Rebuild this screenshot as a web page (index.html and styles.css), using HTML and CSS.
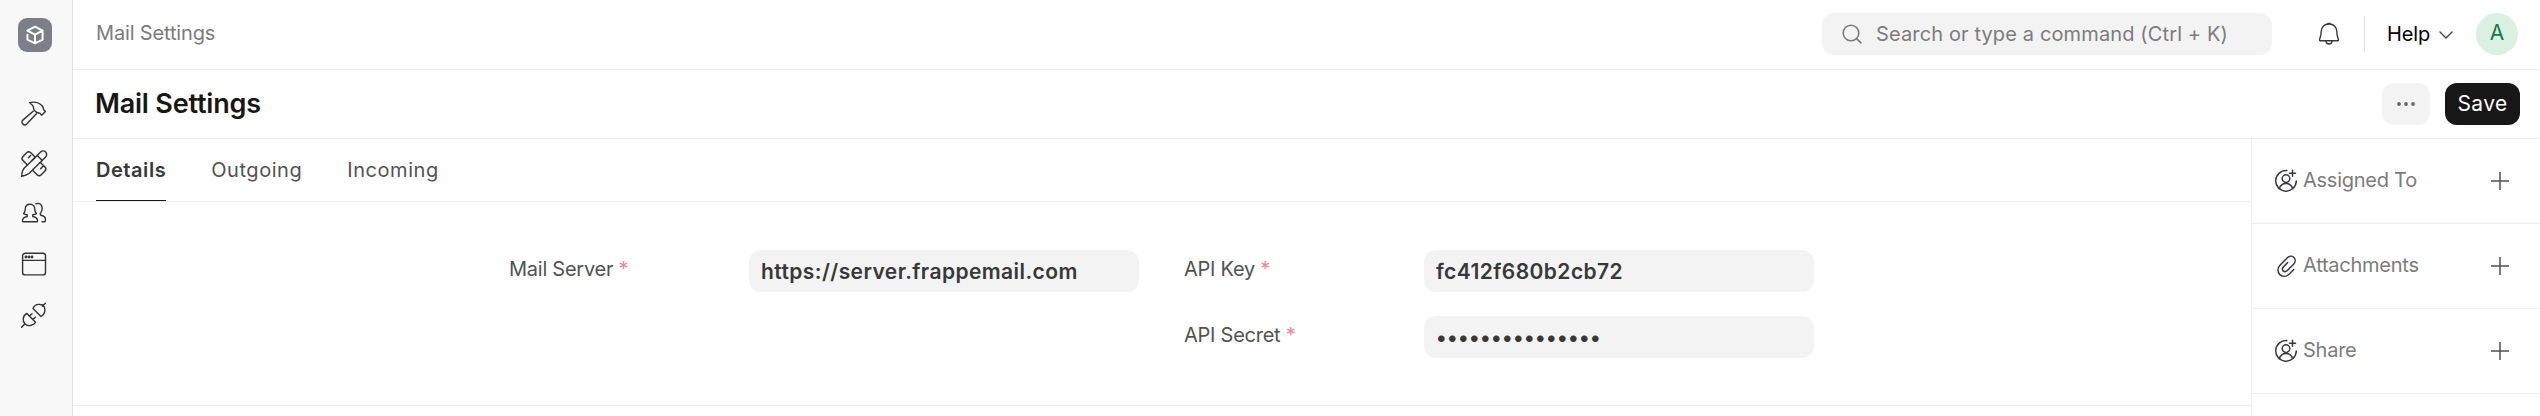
FILE: index.html
```html
<!DOCTYPE html>
<html lang="en">
<head>
<meta charset="utf-8">
<title>Mail Settings</title>
<link rel="stylesheet" href="styles.css">
</head>
<body>
<div class="app">
  <nav class="rail">
    <svg class="logo" viewBox="0 0 34 34"><rect width="34" height="34" rx="9" fill="#7c7f88"/><path d="M9.400 16.800V21.600L17 25.300l7.600-3.700V12.600L17 8.700 9.400 12.600l7.600 4 7.600-4M17 16.600V25.300" stroke="#fff" stroke-width="2"/></svg>
    <div class="rail-items">
      <svg class="ico" viewBox="0 0 30 30"><path d="M10.500 5.600c4.500-1 9.500 0 12.700 3.200.9 1 1.200 2 1.300 3.700l1.900 1.900-3.700 3.800-1.900-1.900c-2-.3-3.900-1-5.300-2.700-1.300-1.700-.6-3.300-1.600-4.700-.8-1.400-2.300-2.300-3.400-3.300Z"/><path d="M14.200 14.200 3.800 23.100a2.700 2.700 0 0 0 3.900 3.900l9.900-10.500"/></svg>
      <svg class="ico" viewBox="0 0 30 30"><path d="M2.600 28.300c.3-3.300.8-6 2.300-7.800L21.600 4.100a3.500 3.500 0 0 1 5 5L10 25.600c-1.800 1.600-4.200 2.300-7.400 2.700Z"/><path d="M18.300 7.400l5 5"/><path d="M13 12.600 16.300 9.300 11.800 4.800a3 3 0 0 0-4.200 0L4 8.400a3 3 0 0 0 0 4.200l4.500 4.500M13.600 22.200l4.500 4.500a3 3 0 0 0 4.200 0l3.600-3.600a3 3 0 0 0 0-4.200l-4.500-4.500M9.400 9.700l2.200-2.200M21.600 20.800l2.200-2.200"/></svg>
      <svg class="ico" viewBox="0 0 30 30"><path d="M11 5.200c-3.300 0-4.700 2.200-4.700 4.800 0 2.200-.8 3.400-1.700 4.600 1.200.8 2.500 1 3.600 1.100v1.800c-3.200.7-4.700 1.700-4.700 3.700v.7c0 .6.300.9.900.9h13.200c.6 0 .9-.3.900-.9v-.7c0-2-1.500-3-4.700-3.700v-1.800c1.100-.1 2.400-.3 3.600-1.100-.9-1.200-1.700-2.400-1.700-4.600 0-2.600-1.400-4.800-4.700-4.800Z"/><path d="M16.800 4.800c4.100-1.400 6.500 1.300 6.400 4.500 0 2.600-.5 3.700-2 5.500l.8 1.500c3 .7 4.400 1.900 4.400 3.900v1.500c0 .8-.4 1.100-1.100 1.100h-2.200"/></svg>
      <svg class="ico" viewBox="0 0 30 30"><rect x="3.600" y="3.200" width="22.900" height="21.700" rx="2.500"/><path d="M3.500 10.400h23"/><g fill="#333" stroke="none"><circle cx="7" cy="7" r="1.400"/><circle cx="10" cy="7" r="1.400"/><circle cx="13" cy="7" r="1.400"/></g></svg>
      <svg class="ico" viewBox="0 0 30 30"><path d="M14 7.500l8 8c5.400-3 5.100-11.500-.7-12-3-.5-6.100.9-7.300 4ZM23.400 5.200l3-3M7.900 12.400l8.600 8.900c-2.500 3.700-7.500 4.400-10.400 1.600-3-3-2.500-8.200 1.800-10.500ZM2.600 26.200l3.300-3.400M10.500 15.100l2.500-2.300M13.900 18.500l2.500-2.300"/></svg>
    </div>
  </nav>
  <main class="main">
    <header class="navbar">
      <span class="crumb">Mail Settings</span>
      <div class="nav-right">
        <div class="search"><svg class="search-ico" viewBox="0 0 20 20"><circle cx="9" cy="9" r="7.800"/><path d="M14.600 14.600l4.300 4.300"/></svg><span>Search or type a command (Ctrl + K)</span></div>
        <svg class="bell" viewBox="0 0 22 24"><path d="M11 2c-5 0-7.800 3.400-7.800 7.500 0 4.200-.8 5.700-1.600 7.800-.3.900.1 1.500.9 1.500h17c.8 0 1.200-.6.900-1.500-.8-2.100-1.600-3.600-1.600-7.800C18.800 5.400 16 2 11 2Z"/><path d="M8 19.200c.3 3.700 5.700 3.700 6 0M10 1.500h2"/></svg>
        <span class="divider"></span>
        <span class="help">Help</span>
        <svg class="chev" viewBox="0 0 14 8"><path d="M1 1l6 6 6-6"/></svg>
        <span class="avatar">A</span>
      </div>
    </header>
    <div class="page-head">
      <h1>Mail Settings</h1>
      <button class="more" aria-label="Menu"><svg viewBox="0 0 18 4"><circle cx="2" cy="2" r="1.900"/><circle cx="9" cy="2" r="1.900"/><circle cx="16" cy="2" r="1.900"/></svg></button>
      <button class="save">Save</button>
    </div>
    <div class="body">
      <section class="content">
        <div class="tabs"><span class="tab active">Details</span><span class="tab">Outgoing</span><span class="tab">Incoming</span></div>
        <div class="form">
          <div class="col">
            <div class="field"><span class="label">Mail Server <i>*</i></span><div class="input">https://server.frappemail.com</div></div>
          </div>
          <div class="col">
            <div class="field"><span class="label">API Key <i>*</i></span><div class="input">fc412f680b2cb72</div></div>
            <div class="field"><span class="label">API Secret <i>*</i></span><div class="input">•••••••••••••••</div></div>
          </div>
        </div>
      </section>
      <aside class="side">
        <div class="side-row"><svg class="side-ico" viewBox="0 0 24 24"><path d="M12.800 1.600A10.300 10.300 0 1 0 22.300 12M18.500 1.200v6M15.500 4.200h6"/><circle cx="12" cy="9.600" r="3.800"/><path d="M5.200 19.600c1-3 3.500-5.200 6.800-5.200s5.800 2.200 6.800 5.200"/></svg><span>Assigned To</span><svg class="plus" viewBox="0 0 18 18"><path d="M9 0v18M0 9h18"/></svg></div>
        <div class="side-row"><svg class="side-ico" viewBox="0 0 24 24"><path d="M19.700 15.600l-4 4.200c-3.300 3.300-7.300 3.200-9.800.8-2.600-2.600-2.700-6.600.3-9.600l6.900-7c2-2 4.900-2.300 6.800-.5 1.800 1.800 1.700 4.600-.3 6.700l-6.300 6.300c-1.300 1.300-3 1.400-4.100.4-1.100-1.200-1-2.700.3-4l4.200-4.300"/></svg><span>Attachments</span><svg class="plus" viewBox="0 0 18 18"><path d="M9 0v18M0 9h18"/></svg></div>
        <div class="side-row"><svg class="side-ico" viewBox="0 0 24 24"><path d="M12.800 1.600A10.300 10.300 0 1 0 22.300 12M18.500 1.200v6M15.500 4.200h6"/><circle cx="12" cy="9.600" r="3.800"/><path d="M5.200 19.600c1-3 3.500-5.200 6.800-5.200s5.800 2.200 6.800 5.200"/></svg><span>Share</span><svg class="plus" viewBox="0 0 18 18"><path d="M9 0v18M0 9h18"/></svg></div>
      </aside>
    </div>
  </main>
</div>
</body>
</html>
```

FILE: styles.css
```css
* { box-sizing: border-box; }
body { margin: 0; background: #fff; font-family: Inter, sans-serif; font-size: 20px; color: #383838; }
svg { display: block; flex: none; fill: none; stroke-linecap: round; stroke-linejoin: round; }
.app { display: flex; height: 416px; overflow: hidden; }
.rail { width: 73px; flex: none; background: #f8f8f8; border-right: 1px solid #e2e2e2; padding: 18px 0 0 18px; }
.logo { width: 34px; height: 34px; }
.rail-items { display: flex; flex-direction: column; gap: 21px; padding: 45px 0 0 1px; }
.ico { width: 30px; height: 30px; stroke: #333; stroke-width: 1.4; }
.main { flex: 1; display: flex; flex-direction: column; min-width: 0; }
.navbar { height: 70px; flex: none; border-bottom: 1px solid #ededed; display: flex; align-items: center; justify-content: space-between; padding: 0 22px 2px 23px; }
.crumb { color: #7c7c7c; padding-bottom: 2px; letter-spacing: -0.15px; }
.nav-right { display: flex; align-items: center; }
.search { width: 450px; height: 42px; border-radius: 12px; background: #f3f3f3; color: #7c7c7c; display: flex; align-items: center; padding-left: 20px; gap: 14px; letter-spacing: 0.13px; }
.search-ico { width: 20px; height: 20px; stroke: #7c7c7c; stroke-width: 1.6; }
.bell { width: 22px; height: 24px; margin-left: 46px; stroke: #383838; stroke-width: 1.4; }
.divider { width: 1px; height: 36px; background: #e2e2e2; margin-left: 24px; }
.help { width: 44px; color: #000; margin-left: 22px; letter-spacing: -0.1px; }
.chev { width: 14px; height: 8px; margin: 3px 23px 0 8px; stroke: #444; stroke-width: 1.4; }
.avatar { width: 42px; height: 42px; border-radius: 50%; background: #daf0e1; color: #16794c; display: flex; align-items: center; justify-content: center; padding-bottom: 2px; font-size: 21px; }
.page-head { height: 69px; flex: none; border-bottom: 1px solid #ededed; display: flex; align-items: center; padding: 0 20px 0 22px; }
h1 { margin: 0 auto 0 0; padding-bottom: 2px; font-size: 27px; font-weight: 600; letter-spacing: -0.2px; color: #171717; }
button { border: 0; font: inherit; height: 42px; border-radius: 12px; padding: 0; }
.more { width: 48px; background: #f3f3f3; display: flex; align-items: center; justify-content: center; }
.more svg { width: 18px; height: 4px; fill: #666; }
.save { width: 75px; margin-left: 15px; padding-bottom: 1px; background: #171717; color: #fff; font-size: 21px; letter-spacing: 0.4px; }
.body { flex: 1; display: flex; min-height: 0; }
.content { flex: 1; display: flex; flex-direction: column; }
.tabs { height: 63px; flex: none; border-bottom: 1px solid #ededed; display: flex; gap: 45px; padding-left: 23px; }
.tab { height: 62px; line-height: 62px; color: #525252; border-bottom: 1px solid transparent; letter-spacing: 0.55px; }
.tab.active { font-weight: 600; color: #383838; border-color: #171717; }
.form { height: 204px; flex: none; border-bottom: 1px solid #ededed; padding: 48px 0 0 436px; display: flex; gap: 45px; }
.col { width: 630px; display: flex; flex-direction: column; gap: 24px; }
.field { display: flex; height: 42px; }
.label { width: 240px; color: #525252; line-height: 38px; white-space: pre; letter-spacing: -0.25px; }
.label i { font-style: normal; color: #f08a8a; }
.input { width: 390px; height: 42px; border-radius: 12px; background: #f3f3f3; padding-left: 12px; line-height: 43px; font-size: 21px; font-weight: 600; letter-spacing: 0.02em; }
.side { width: 289px; flex: none; border-left: 1px solid #ededed; }
.side-row { height: 85px; border-bottom: 1px solid #ededed; display: flex; align-items: center; padding: 0 31px 0 22px; color: #7c7c7c; }
.side-ico { width: 24px; height: 24px; stroke: #383838; stroke-width: 1.5; }
.side-row span { margin: 0 auto 2px 5px; letter-spacing: -0.25px; }
.plus { width: 18px; height: 18px; stroke: #525252; stroke-width: 1.5; stroke-linecap: butt; }
```
